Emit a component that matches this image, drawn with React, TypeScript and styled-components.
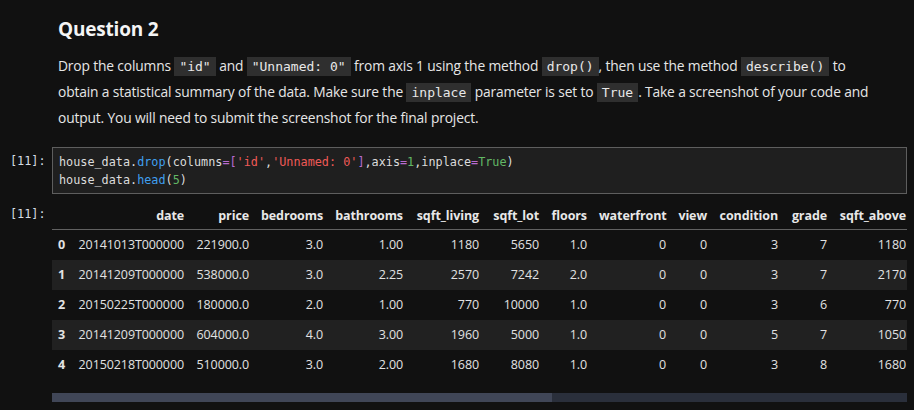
import styled, { createGlobalStyle } from "styled-components";

const GlobalStyle = createGlobalStyle`
    html, body { margin:0; padding:0; background:#111111; }
    body { font-family:"Open Sans", "Noto Sans", sans-serif; color:#e2e2e2; }
`

const Notebook = styled.main`
    width:914px; padding-top:16px;
    display:flex; flex-direction:column;
`

const MarkdownCell = styled.section`
    padding:0 40px 0 58px;
`

const Heading = styled.h2`
    margin:0 0 11px; font-size:19px; font-weight:700;
    line-height:26px; color:#f4f4f4; letter-spacing:-0.2px;
`

const Para = styled.p`
    margin:0; font-size:13.8px; line-height:25px; color:#e6e6e6;
    letter-spacing:-0.15px; white-space:nowrap;
`

const InlineCode = styled.code`
    font-family:"DejaVu Sans Mono", monospace; font-size:13px;
    background:#2f2f2f; padding:2px 5px; letter-spacing:0;
    color:#e8e8e8;
`

const Cell = styled.div<{ $top?: number }>`
    display:flex; align-items:flex-start;
    margin-top:${p => p.$top ?? 0}px;
    padding-right:7px;
`

const Prompt = styled.div<{ $pad?: number }>`
    width:52px; flex:none; box-sizing:border-box;
    padding:${p => p.$pad ?? 0}px 0 0 10px;
    font-family:"DejaVu Sans Mono", monospace; font-size:11.8px;
    line-height:17px; color:#d5dce4;
`

const CodeBox = styled.pre`
    flex:1; margin:0; box-sizing:border-box;
    border:1px solid #5e5e5e; background:#1f1f1f;
    padding:5px 6px 4px;
    font-family:"DejaVu Sans Mono", monospace; font-size:11.8px;
    line-height:18px; color:#dcdcdc;
`

const Tok = styled.span<{ $c: string }>`
    color:${p => p.$c};
`

const Output = styled.div`
    flex:1; min-width:0;
    display:flex; flex-direction:column; gap:13px;
`

const TableViewport = styled.div`
    overflow:hidden;
`

const ScrollTrack = styled.div`
    height:9px; background:#2a2f3b;
    display:flex;
`

const ScrollThumb = styled.div<{ $ratio: number }>`
    width:${p => p.$ratio * 100}%; background:#404657;
`

const Table = styled.table`
    width:860px; table-layout:fixed; border-collapse:collapse;
    font-family:"Open Sans", "Noto Sans", sans-serif; font-size:12.5px;
    color:#e2e2e2; letter-spacing:-0.1px;
`

const HeadCell = styled.th`
    height:27px; padding:0 6px; text-align:right; font-weight:700;
    border-bottom:1px solid #616161; white-space:nowrap; color:#e8e8e8;
    vertical-align:middle;
`

const Row = styled.tr`
    height:30px;
    &:nth-child(even) { background:#212121; }
`

const IndexCell = styled.th`
    padding:0 0 0 6px; text-align:left; font-weight:700; font-size:12.6px;
`

const DataCell = styled.td`
    padding:0 6px; text-align:right; white-space:nowrap;
`

const P = "#b86bd0";
const S = "#ef5a57";
const G = "#62b865";
const B = "#3f9fef";

const columns = [
    ["", 19], ["date", 119], ["price", 65], ["bedrooms", 74], ["bathrooms", 80],
    ["sqft_living", 76], ["sqft_lot", 60], ["floors", 48], ["waterfront", 79],
    ["view", 41], ["condition", 71], ["grade", 49], ["sqft_above", 79],
] as const;

const rows = [
    ["20141013T000000", "221900.0", "3.0", "1.00", "1180", "5650", "1.0", "0", "0", "3", "7", "1180"],
    ["20141209T000000", "538000.0", "3.0", "2.25", "2570", "7242", "2.0", "0", "0", "3", "7", "2170"],
    ["20150225T000000", "180000.0", "2.0", "1.00", "770", "10000", "1.0", "0", "0", "3", "6", "770"],
    ["20141209T000000", "604000.0", "4.0", "3.00", "1960", "5000", "1.0", "0", "0", "5", "7", "1050"],
    ["20150218T000000", "510000.0", "3.0", "2.00", "1680", "8080", "1.0", "0", "0", "3", "8", "1680"],
];

// visible part of the wide dataframe, as shown by the scrollbar thumb
const visibleRatio = 500 / 855;

const App = () => {
    return (
        <>
            <GlobalStyle />
            <Notebook>
                <MarkdownCell>
                    <Heading>Question 2</Heading>
                    <Para>
                        Drop the columns <InlineCode>"id"</InlineCode> and <InlineCode>"Unnamed: 0"</InlineCode> from axis 1 using the method <InlineCode>drop()</InlineCode>, then use the method <InlineCode>describe()</InlineCode> to<br />
                        obtain a statistical summary of the data. Make sure the <InlineCode>inplace</InlineCode> parameter is set to <InlineCode>True</InlineCode>. Take a screenshot of your code and<br />
                        output. You will need to submit the screenshot for the final project.
                    </Para>
                </MarkdownCell>

                <Cell $top={17}>
                    <Prompt $pad={6}>[11]:</Prompt>
                    <CodeBox>
                        house_data.<Tok $c={B}>drop</Tok>(columns<Tok $c={P}>=[</Tok><Tok $c={S}>'id'</Tok>,<Tok $c={S}>'Unnamed: 0'</Tok><Tok $c={P}>]</Tok>,axis<Tok $c={P}>=</Tok><Tok $c={G}>1</Tok>,inplace<Tok $c={P}>=</Tok><Tok $c={G}>True</Tok>){"\n"}
                        house_data.<Tok $c={B}>head</Tok>(<Tok $c={G}>5</Tok>)
                    </CodeBox>
                </Cell>

                <Cell $top={8}>
                    <Prompt $pad={4}>[11]:</Prompt>
                    <Output>
                        <TableViewport>
                            <Table>
                                <colgroup>
                                    {columns.map(([name, w]) => <col key={name || "idx"} style={{ width: w }} />)}
                                </colgroup>
                                <thead>
                                    <tr>
                                        {columns.map(([name]) => <HeadCell key={name || "idx"}>{name}</HeadCell>)}
                                    </tr>
                                </thead>
                                <tbody>
                                    {rows.map((r, i) => (
                                        <Row key={i}>
                                            <IndexCell>{i}</IndexCell>
                                            {r.map((v, j) => <DataCell key={j}>{v}</DataCell>)}
                                        </Row>
                                    ))}
                                </tbody>
                            </Table>
                        </TableViewport>
                        <ScrollTrack>
                            <ScrollThumb $ratio={visibleRatio} />
                        </ScrollTrack>
                    </Output>
                </Cell>
            </Notebook>
        </>
    )
}

export default App;
